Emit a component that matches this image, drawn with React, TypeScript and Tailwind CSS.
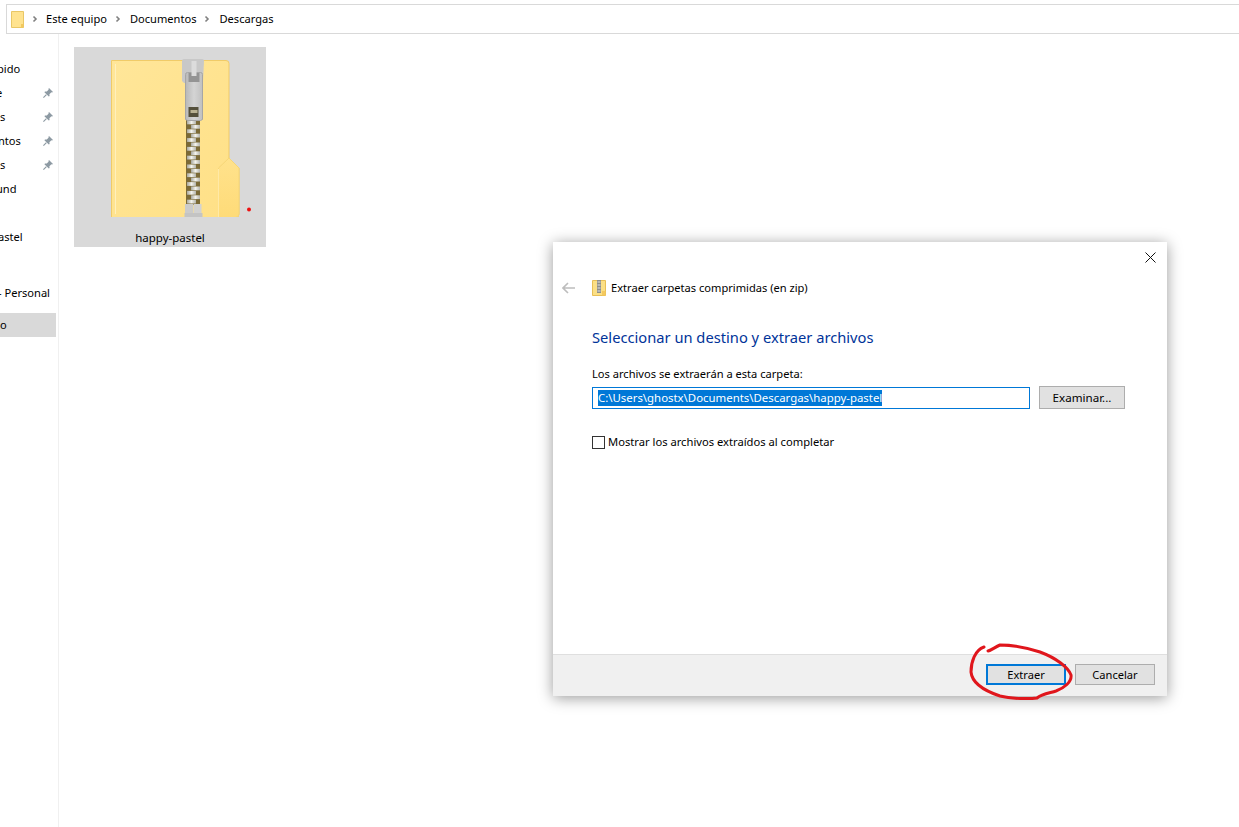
const teeth = Array.from({ length: 19 }, (_, i) => 73.5 + i * 4.4)

const sidebarRows = [
  { text: 'pido', pin: false, shift: '-ml-[3px]' },
  { text: 'e', pin: true, shift: '-ml-[4px]' },
  { text: 's', pin: true, shift: 'ml-0' },
  { text: 'ntos', pin: true, shift: '-ml-[2px]' },
  { text: 's', pin: true, shift: 'ml-0' },
  { text: 'und', pin: false, shift: '-ml-[4px]' },
  { text: '', pin: false, shift: 'ml-0' },
  { text: 'astel', pin: false, shift: '-ml-[2px]' },
]

function Pin() {
  return (
    <svg width="12" height="12" viewBox="0 0 12 12" className="-mt-[2px] shrink-0">
      <path d="M7 1l4 4-1 .6-.6-.3L7.4 7.2 7.6 9 6.8 9.6 2.4 5.2 3 4.4l1.8.2 1.9-2-.3-.6z" fill="#8d9aa3" />
      <path d="M4.4 7.6L1.4 10.6" stroke="#8d9aa3" strokeWidth="1.2" />
    </svg>
  )
}

function Chevron() {
  return (
    <svg width="6" height="8" viewBox="0 0 6 8" className="shrink-0">
      <path d="M1.5 1.5L4 4 1.5 6.5" fill="none" stroke="#808080" strokeWidth="1.6" />
    </svg>
  )
}

function ZipFolder() {
  return (
    <svg width="192" height="170" viewBox="0 0 192 170" className="shrink-0">
      <defs>
        <linearGradient id="folderFill" x1="0" y1="0" x2="1" y2="1">
          <stop offset="0" stopColor="#ffe699" />
          <stop offset="1" stopColor="#ffe086" />
        </linearGradient>
        <linearGradient id="tabFill" x1="0" y1="0" x2="0" y2="1">
          <stop offset="0" stopColor="#ffe28c" />
          <stop offset="1" stopColor="#fedb78" />
        </linearGradient>
        <linearGradient id="metal" x1="0" y1="0" x2="1" y2="0">
          <stop offset="0" stopColor="#b8b8b8" />
          <stop offset="0.5" stopColor="#d4d4d4" />
          <stop offset="1" stopColor="#c0c0c0" />
        </linearGradient>
        <linearGradient id="tooth" x1="0" y1="0" x2="1" y2="0">
          <stop offset="0" stopColor="#a8a8a0" />
          <stop offset="0.5" stopColor="#f4f4ee" />
          <stop offset="1" stopColor="#b4b4ac" />
        </linearGradient>
      </defs>
      <path d="M37.5 13.5H152a3 3 0 0 1 3 3V111l10 10v46a4 4 0 0 1-4 4H37.5z" fill="url(#folderFill)" stroke="#f0cb68" />
      <path d="M41.5 17v150" stroke="#fff0bd" strokeWidth="1" />
      <path d="M144.5 170.5V121L155 111l10 10v46a4 4 0 0 1-4 3.5z" fill="url(#tabFill)" stroke="#f6d677" />
      <path d="M144.5 170V122" stroke="#ffe9a6" />
      {/* teeth */}
      <rect x="112" y="70" width="14" height="88" fill="#7b6a37" />
      {teeth.map((y, i) => (
        <rect
          key={y}
          x={i % 2 === 0 ? 113 : 117}
          y={y}
          width="9"
          height="3.8"
          fill="url(#tooth)"
        />
      ))}
      {/* bottom stop */}
      <rect x="111" y="157" width="8" height="9" fill="#cbcbcb" />
      <rect x="119.5" y="157" width="8" height="9" fill="#d2d2d2" />
      <rect x="110.5" y="166" width="18" height="5" fill="#c4c4c4" />
      {/* pull */}
      <path d="M108 14a2 2 0 0 1 2-2h18a2 2 0 0 1 2 2l-1 20-2 2h-17l-2-2z" fill="#c8c8c8" />
      <path d="M111.5 27.5a2 2 0 0 1 2-2h13a2 2 0 0 1 2 2v45l-2 1h-13l-2-1z" fill="url(#metal)" stroke="#a6a6a6" />
      <rect x="114.5" y="26" width="11" height="9" fill="#949494" />
      <rect x="117.5" y="14" width="5" height="15" fill="#dcdcdc" />
      <rect x="114.5" y="60" width="10" height="10" fill="#55503b" />
      <rect x="116.5" y="63" width="7" height="3" fill="#b9b192" />
      {/* red dot */}
      <circle cx="175" cy="162.5" r="2" fill="#ee1111" />
    </svg>
  )
}

function TinyZip() {
  return (
    <svg width="14" height="16" viewBox="0 0 14 16" className="shrink-0">
      <path d="M0.5 0.5H13.5V15.5H0.5z" fill="#fbdf85" stroke="#e8bf55" />
      <rect x="5" y="0" width="4" height="13" fill="#8f8f88" />
      <path d="M5.5 2h3M5.5 5h3M5.5 8h3M5.5 11h3" stroke="#e2e2e2" />
      <path d="M10 11h3.5v4.5H10z" fill="#f4c95f" />
    </svg>
  )
}

function DialogButton({ label, primary = false }: { label: string; primary?: boolean }) {
  return (
    <button
      className={`h-[21px] w-[80px] bg-[#e1e1e1] pt-[1px] text-[11.1px] text-black ${
        primary ? 'border-2 border-[#0078d7]' : 'border border-[#adadad]'
      }`}
    >
      {label}
    </button>
  )
}

export default function App() {
  return (
    <div className="relative h-[827px] w-[1239px] overflow-hidden bg-white font-['Noto_Sans',sans-serif] text-[11.1px] text-black">
      {/* address bar */}
      <div className="ml-[6px] mt-[4px] flex h-[30px] items-center border border-r-0 border-[#d9d9d9] pl-[4px]">
        <svg width="13" height="17" viewBox="0 0 13 17" className="shrink-0">
          <path d="M0.5 0.5H12.5V16.5H0.5z" fill="#ffe38f" stroke="#e9c766" />
          <path d="M10 13h2.5v3.5H10z" fill="#f3c95e" />
        </svg>
        <div className="ml-[8px]"><Chevron /></div>
        <span className="ml-[8px]">Este equipo</span>
        <div className="ml-[8px]"><Chevron /></div>
        <span className="ml-[9px]">Documentos</span>
        <div className="ml-[8px]"><Chevron /></div>
        <span className="ml-[9px]">Descargas</span>
      </div>

      <div className="flex h-[793px]">
        {/* nav pane, scrolled off to the left */}
        <div className="w-[59px] shrink-0 overflow-hidden border-r border-[#f0f0f0] pt-[23px]">
          {sidebarRows.map((row, i) => (
            <div key={i} className="flex h-[24px] items-center justify-between pr-[4px] pt-[1px]">
              <span className={row.shift}>{row.text}</span>
              {row.pin && <Pin />}
            </div>
          ))}
          <div className="mt-[32px] flex h-[24px] items-center pt-[1px]">
            <span className="-ml-[2px]">- Personal</span>
          </div>
          <div className="mr-[2px] mt-[8px] flex h-[24px] items-center bg-[#d9d9d9]">
            <span>o</span>
          </div>
        </div>

        {/* file pane */}
        <div className="pl-[15px] pt-[13px]">
          <div className="flex h-[200px] w-[192px] flex-col items-center bg-[#d9d9d9]">
            <ZipFolder />
            <span className="mt-[13px] text-[11.5px] leading-[16px]">happy-pastel</span>
          </div>
        </div>
      </div>

      {/* extract dialog */}
      <div className="absolute left-[553px] top-[242px] flex h-[454px] w-[614px] flex-col bg-white shadow-[0_2px_14px_rgba(0,0,0,0.4)]">
        <div className="flex justify-end pr-[11px] pt-[10px]">
          <svg width="11" height="11" viewBox="0 0 11 11">
            <path d="M0.5 0.5l10 10M10.5 0.5l-10 10" stroke="#111" strokeWidth="1" />
          </svg>
        </div>
        <div className="mt-[16px] flex h-[18px] items-center pl-[9px]">
          <svg width="13" height="12" viewBox="0 0 13 12" className="shrink-0">
            <path d="M6 1L1 6l5 5M1 6h12" fill="none" stroke="#bdbdbd" strokeWidth="1.6" />
          </svg>
          <div className="ml-[17px]"><TinyZip /></div>
          <span className="ml-[5px]">Extraer carpetas comprimidas (en zip)</span>
        </div>
        <div className="flex flex-1 flex-col pl-[39px] pr-[42px]">
          <h1 className="mt-[29px] text-[14.7px] font-normal leading-[22px] text-[#003399]">
            Seleccionar un destino y extraer archivos
          </h1>
          <p className="mt-[18px] leading-[16px]">Los archivos se extraerán a esta carpeta:</p>
          <div className="mt-[4px] flex items-center">
            <div className="flex h-[22px] w-[438px] items-center border border-[#0078d7] pl-[5px]">
              <span className="bg-[#0078d7] text-[11.4px] leading-[16px] text-white">
                C:\Users\ghostx\Documents\Descargas\happy-pastel
              </span>
            </div>
            <button className="ml-[9px] h-[23px] w-[86px] border border-[#adadad] bg-[#e1e1e1] text-[11.6px]">
              Examinar...
            </button>
          </div>
          <label className="mt-[25px] flex items-center">
            <span className="h-[13px] w-[13px] shrink-0 border border-[#333]" />
            <span className="ml-[3px] text-[11.2px] leading-[16px]">Mostrar los archivos extraídos al completar</span>
          </label>
        </div>
        <div className="flex h-[42px] items-start justify-end gap-[9px] border-t border-[#dfdfdf] bg-[#f0f0f0] pr-[12px] pt-[9px]">
          <DialogButton label="Extraer" primary />
          <DialogButton label="Cancelar" />
        </div>
      </div>

      {/* hand drawn red circle */}
      <svg className="pointer-events-none absolute left-0 top-0" width="1239" height="827" viewBox="0 0 1239 827">
        <path
          d="M984 647C975 650 971 662 971 672C972 683 985 691 1000 696C1012 699 1030 699 1037 698C1042 694 1050 693 1056 691C1064 688 1072 682 1071 675C1068 667 1056 658 1040 652C1028 648 1012 645 1000 645C995 647 992 650 988 651"
          fill="none"
          stroke="#e0161c"
          strokeWidth="3"
          strokeLinecap="round"
        />
      </svg>
    </div>
  )
}
